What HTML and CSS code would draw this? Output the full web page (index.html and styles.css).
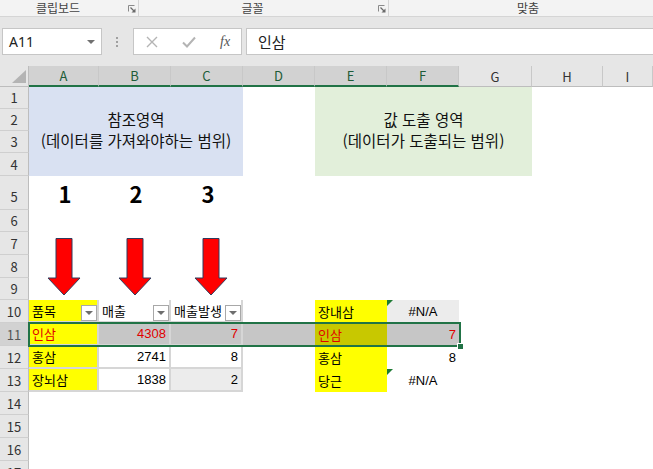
FILE: index.html
```html
<!DOCTYPE html>
<html lang="ko">
<head>
    <meta charset="UTF-8">
    <title>VLOOKUP 참조영역</title>
    <link rel="stylesheet" href="styles.css">
</head>
<body>
    <div class="ribbon">
        <div class="group g1">
            <span class="label">클립보드</span>
            <span class="launcher"><svg width="8" height="8" viewBox="0 0 8 8"><path d="M0.5 6.5V0.5H6.5" fill="none" stroke="#8a8a8a"/><path d="M2.5 2.5L6 6" stroke="#6a6a6a" stroke-width="1.2"/><path d="M3.5 7.5H7.5V3.5Z" fill="#6a6a6a"/></svg></span>
        </div>
        <div class="group g2">
            <span class="label">글꼴</span>
            <span class="launcher"><svg width="8" height="8" viewBox="0 0 8 8"><path d="M0.5 6.5V0.5H6.5" fill="none" stroke="#8a8a8a"/><path d="M2.5 2.5L6 6" stroke="#6a6a6a" stroke-width="1.2"/><path d="M3.5 7.5H7.5V3.5Z" fill="#6a6a6a"/></svg></span>
        </div>
        <div class="group g3">
            <span class="label">맞춤</span>
        </div>
    </div>

    <div class="fbar">
        <div class="namebox">
            <span>A11</span>
            <span class="caret"></span>
        </div>
        <div class="grip"><i></i><i></i><i></i></div>
        <div class="fx-tools">
            <svg width="12" height="12" viewBox="0 0 12 12"><path d="M1 1L11 11M11 1L1 11" stroke="#b4b4b4" stroke-width="1.4"/></svg>
            <svg width="14" height="12" viewBox="0 0 14 12"><path d="M1 6.5L5 10.5L13 1.5" fill="none" stroke="#b4b4b4" stroke-width="2"/></svg>
            <span class="fx">fx</span>
        </div>
        <div class="formula">인삼</div>
    </div>

    <div class="sheet">
        <!-- column headers -->
        <div class="corner"><span></span></div>
        <div class="ch on">A</div>
        <div class="ch on">B</div>
        <div class="ch on">C</div>
        <div class="ch on">D</div>
        <div class="ch on">E</div>
        <div class="ch on">F</div>
        <div class="ch">G</div>
        <div class="ch">H</div>
        <div class="ch">I</div>

        <!-- rows 1-4 -->
        <div class="rh">1</div>
        <div class="merge ref">참조영역<br>(데이터를 가져와야하는 범위)</div>
        <div></div>
        <div class="merge out">값 도출 영역<br>(데이터가 도출되는 범위)</div>
        <div></div><div></div>
        <div class="rh">2</div><div></div><div></div><div></div>
        <div class="rh">3</div><div></div><div></div><div></div>
        <div class="rh">4</div><div></div><div></div><div></div>

        <!-- row 5 -->
        <div class="rh low">5</div>
        <div class="big">1</div>
        <div class="big">2</div>
        <div class="big">3</div>
        <div></div><div></div><div></div><div></div><div></div><div></div>

        <!-- row 6 -->
        <div class="rh">6</div>
        <div></div><div></div><div></div><div></div><div></div><div></div><div></div><div></div><div></div>

        <!-- rows 7-9 -->
        <div class="rh">7</div>
        <div class="arrow"><svg width="36" height="68" viewBox="0 0 36 68"><path d="M10 6.5H26V46H34L18 63L2 46H10Z" fill="#ff0000" stroke="#2f3b5c" stroke-width="1"/></svg></div>
        <div class="arrow"><svg width="36" height="68" viewBox="0 0 36 68"><path d="M10 6.5H26V46H34L18 63L2 46H10Z" fill="#ff0000" stroke="#2f3b5c" stroke-width="1"/></svg></div>
        <div class="arrow shift"><svg width="36" height="68" viewBox="0 0 36 68"><path d="M10 6.5H26V46H34L18 63L2 46H10Z" fill="#ff0000" stroke="#2f3b5c" stroke-width="1"/></svg></div>
        <div></div><div></div><div></div><div></div><div></div><div></div>
        <div class="rh">8</div><div></div><div></div><div></div><div></div><div></div><div></div>
        <div class="rh">9</div><div></div><div></div><div></div><div></div><div></div><div></div>

        <!-- row 10 -->
        <div class="rh">10</div>
        <div class="t th yellow"><span class="txt">품목</span><span class="fbtn"></span></div>
        <div class="t th"><span class="txt">매출</span><span class="fbtn"></span></div>
        <div class="t th"><span class="txt">매출발생</span><span class="fbtn"></span></div>
        <div></div>
        <div class="v yellow">장내삼</div>
        <div class="v na grey flag">#N/A</div>
        <div></div><div></div><div></div>

        <!-- row 11 (selected) -->
        <div class="rh on">11</div>
        <div class="t yellow red active">인삼<div class="sel-box"><span class="handle"></span></div></div>
        <div class="t sel red right">4308</div>
        <div class="t sel red right">7</div>
        <div class="sel"></div>
        <div class="v sel-yellow red">인삼</div>
        <div class="v sel red right">7</div>
        <div></div><div></div><div></div>

        <!-- row 12 -->
        <div class="rh">12</div>
        <div class="t yellow">홍삼</div>
        <div class="t right">2741</div>
        <div class="t right">8</div>
        <div></div>
        <div class="v yellow">홍삼</div>
        <div class="v right">8</div>
        <div></div><div></div><div></div>

        <!-- row 13 -->
        <div class="rh">13</div>
        <div class="t yellow">장뇌삼</div>
        <div class="t right">1838</div>
        <div class="t right grey">2</div>
        <div></div>
        <div class="v yellow">당근</div>
        <div class="v na flag">#N/A</div>
        <div></div><div></div><div></div>

        <!-- rows 14-17 -->
        <div class="rh">14</div><div></div><div></div><div></div><div></div><div></div><div></div><div></div><div></div><div></div>
        <div class="rh">15</div><div></div><div></div><div></div><div></div><div></div><div></div><div></div><div></div><div></div>
        <div class="rh">16</div><div></div><div></div><div></div><div></div><div></div><div></div><div></div><div></div><div></div>
        <div class="rh">17</div><div></div><div></div><div></div><div></div><div></div><div></div><div></div><div></div><div></div>
    </div>
</body>
</html>
```

FILE: styles.css
```css
* {
    margin: 0;
    padding: 0;
    box-sizing: border-box;
}

body {
    width: 653px;
    height: 469px;
    overflow: hidden;
    background: #fff;
    font-family: "Noto Sans CJK KR", "Noto Sans", sans-serif;
    color: #000;
}

/* ribbon group labels */
.ribbon {
    display: flex;
    height: 17px;
    overflow: hidden;
    background: #f3f3f3;
    border-bottom: 1px solid #d5d5d5;
    font-size: 12px;
    color: #444;
    white-space: nowrap;
}

.group {
    display: flex;
    align-items: center;
    flex-shrink: 0;
    height: 16px;
    border-right: 1px solid #d5d5d5;
}

.g1 { width: 139px; }
.g2 { width: 250px; }

.g3 {
    flex: 1;
    padding-left: 14px;
    border-right: none;
}

.label {
    flex: 1;
    text-align: center;
    line-height: 16px;
}

.launcher {
    display: flex;
    width: 22px;
    padding-left: 12px;
    padding-top: 2px;
}

/* formula bar */
.fbar {
    display: flex;
    align-items: center;
    height: 49px;
    padding-left: 2px;
    background: #e6e6e6;
}

.namebox {
    display: flex;
    align-items: center;
    justify-content: space-between;
    width: 100px;
    height: 27px;
    padding: 0 6px 0 6px;
    background: #fff;
    border: 1px solid #c6c6c6;
    font-family: "Noto Sans", sans-serif;
    font-size: 14px;
    color: #222;
}

.caret {
    width: 0;
    height: 0;
    border-left: 4px solid transparent;
    border-right: 4px solid transparent;
    border-top: 4px solid #707070;
}

.grip {
    display: flex;
    flex-direction: column;
    gap: 2px;
    margin-left: 14px;
    width: 3px;
}

.grip i {
    display: block;
    width: 2px;
    height: 2px;
    background: #a0a0a0;
}

.fx-tools {
    display: flex;
    align-items: center;
    gap: 24px;
    margin-left: 14px;
    width: 109px;
    height: 27px;
    padding-left: 12px;
    background: #fff;
    border: 1px solid #c6c6c6;
}

.fx {
    font-family: "Liberation Serif", serif;
    font-style: italic;
    font-size: 14px;
    color: #555;
}

.formula {
    flex: 1;
    height: 27px;
    margin-left: 4px;
    padding-left: 11px;
    background: #fff;
    border: 1px solid #c6c6c6;
    border-right: none;
    font-size: 15px;
    line-height: 25px;
    color: #222;
}

/* worksheet */
.sheet {
    display: grid;
    grid-template-columns: 29px 70px 72px 72px 72px 72px 72px 73px 71px 1fr;
    grid-template-rows: 21px 22px 22px 22px 23px 34px 22px 23px 23px 22px 23px 23px 23px 23px 23px 23px 23px 23px;
    font-family: "Liberation Sans", "Noto Sans CJK KR", sans-serif;
    font-size: 13px;
}

.corner {
    display: flex;
    align-items: flex-end;
    justify-content: flex-end;
    padding: 0 2px 3px 0;
    background: #e6e6e6;
    border-right: 1px solid #bdbdbd;
    border-bottom: 1px solid #bdbdbd;
}

.corner span {
    width: 0;
    height: 0;
    border-left: 14px solid transparent;
    border-bottom: 13px solid #b4b4b4;
}

.ch {
    display: flex;
    align-items: center;
    justify-content: center;
    background: #e6e6e6;
    border-right: 1px solid #c8c8c8;
    border-bottom: 1px solid #bdbdbd;
    font-family: "Noto Sans CJK KR", sans-serif;
    font-size: 13px;
    color: #333;
}

.ch.on {
    background: #d2d2d2;
    border-bottom: 2px solid #217346;
    color: #1d5c38;
}

.rh {
    display: flex;
    align-items: center;
    justify-content: center;
    background: #e6e6e6;
    border-right: 1px solid #bdbdbd;
    border-bottom: 1px solid #cfcfcf;
    font-family: "Noto Sans CJK KR", sans-serif;
    font-size: 13px;
    color: #333;
}

.rh.low {
    align-items: flex-end;
    padding-bottom: 3px;
}

.rh.on {
    background: #d2d2d2;
    color: #555;
}

.merge {
    grid-column: span 3;
    grid-row: span 4;
    display: flex;
    align-items: center;
    justify-content: center;
    text-align: center;
    line-height: 21px;
    padding-bottom: 3px;
    font-family: "Noto Sans CJK KR", sans-serif;
    font-size: 15.5px;
    color: #111;
}

.ref { background: #d9e1f2; }
.out { background: #e2efda; }

.big {
    display: flex;
    align-items: center;
    justify-content: center;
    padding-left: 2px;
    font-family: "Noto Sans CJK KR", sans-serif;
    font-size: 22px;
    font-weight: bold;
    line-height: 1;
}

.arrow {
    grid-row: span 3;
    display: flex;
    justify-content: center;
    align-items: flex-start;
}

.arrow.shift { padding-left: 7px; }

/* data cells */
.t,
.v {
    display: flex;
    align-items: center;
    padding: 0 3px;
    white-space: nowrap;
    overflow: hidden;
}

.t {
    border-right: 2px solid #d6d6d6;
    border-bottom: 2px solid #d6d6d6;
}

.th { padding-right: 0; }

.th .txt { flex: 1; overflow: hidden; }

.fbtn {
    display: flex;
    align-items: center;
    justify-content: center;
    flex-shrink: 0;
    align-self: flex-end;
    width: 16px;
    height: 16px;
    background: #fff;
    border: 1px solid #a8a8a8;
}

.fbtn::after {
    content: "";
    border-left: 4px solid transparent;
    border-right: 4px solid transparent;
    border-top: 4px solid #6e6e6e;
}

.yellow { background: #ffff00; }
.grey { background: #ececec; }
.sel { background: #c6c6c6; }
.sel-yellow { background: #c8c800; }
.red { color: #e00000; }
.right { justify-content: flex-end; }
.na { justify-content: center; }

.flag { position: relative; }

.flag::before {
    content: "";
    position: absolute;
    left: 0;
    top: 0;
    border-top: 6px solid #1e7b34;
    border-right: 6px solid transparent;
}

.active {
    position: relative;
    z-index: 2;
    overflow: visible;
}

.sel-box {
    position: absolute;
    left: -1px;
    top: -1px;
    width: 433px;
    height: 25px;
    border: 2px solid #217346;
    pointer-events: none;
}

.handle {
    position: absolute;
    right: -5px;
    bottom: -5px;
    width: 7px;
    height: 7px;
    background: #217346;
    border: 1px solid #fff;
}
```
